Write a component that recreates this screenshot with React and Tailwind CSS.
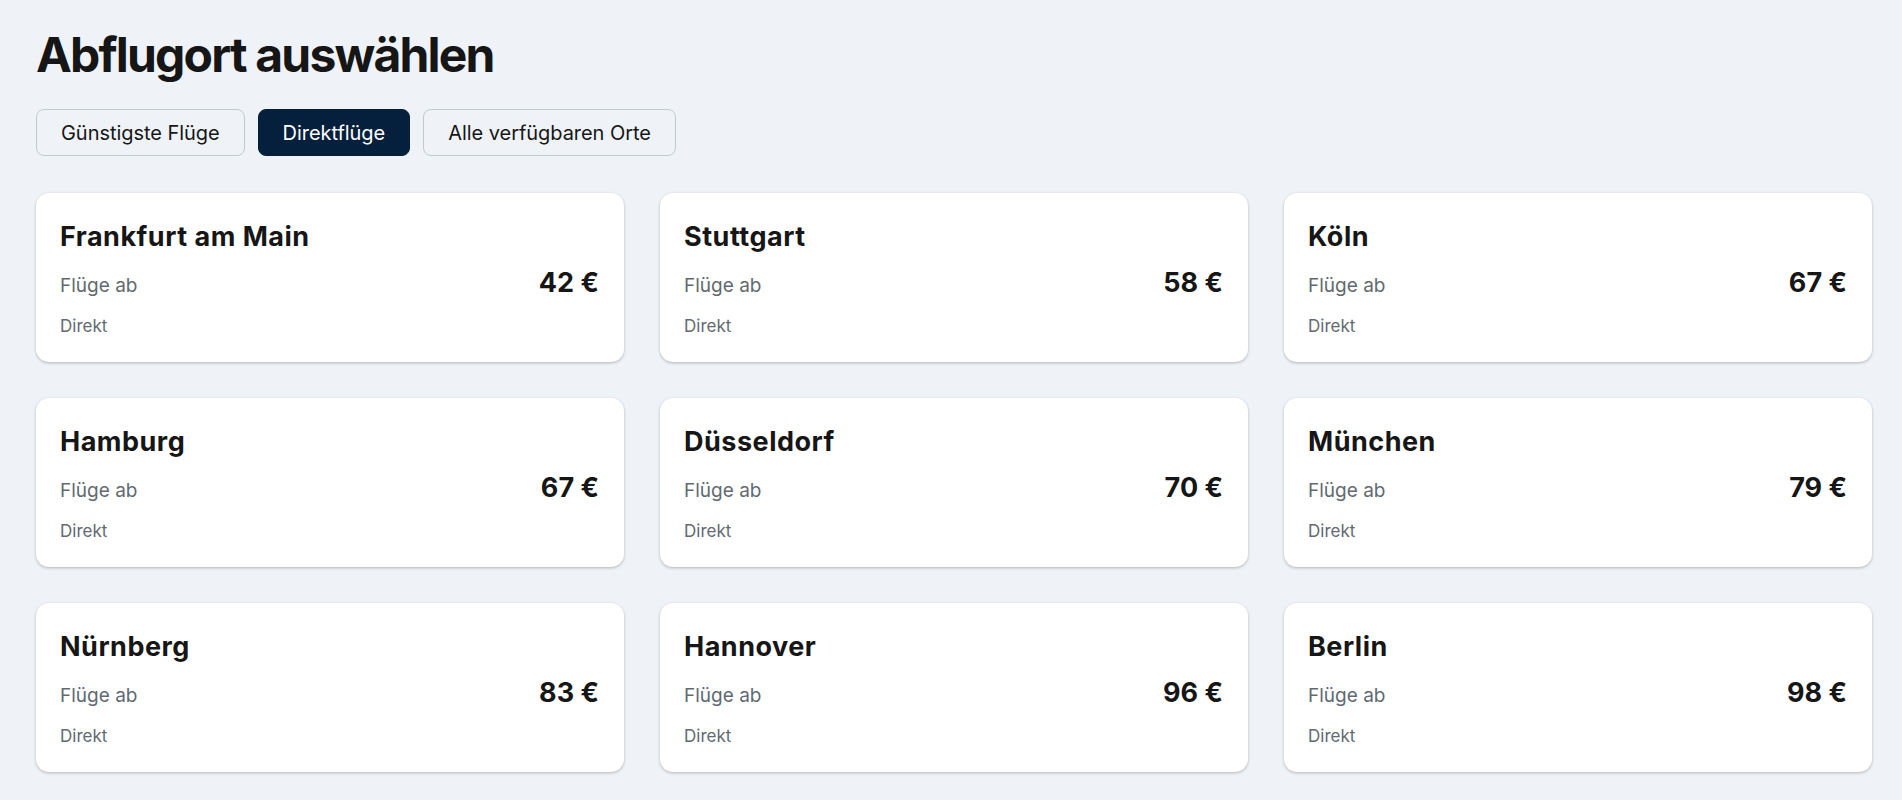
import React from "react";

const cities = [
  { name: "Frankfurt am Main", price: 42 },
  { name: "Stuttgart", price: 58 },
  { name: "Köln", price: 67 },
  { name: "Hamburg", price: 67 },
  { name: "Düsseldorf", price: 70 },
  { name: "München", price: 79 },
  { name: "Nürnberg", price: 83 },
  { name: "Hannover", price: 96 },
  { name: "Berlin", price: 98 },
];

const filters = [
  { label: "Günstigste Flüge", active: false },
  { label: "Direktflüge", active: true },
  { label: "Alle verfügbaren Orte", active: false },
];

function CityCard({ name, price }) {
  return (
    <div className="bg-white rounded-[13px] shadow-[0_1px_3px_0_rgba(37,32,31,0.3)] pl-6 pr-[25px] pt-[28px] pb-[26px]">
      <h3 className="text-[27px] leading-[32px] font-bold tracking-[0.5px] text-[#161616]">{name}</h3>
      <div className="mt-[14px] flex items-baseline justify-between h-[32px]">
        <span className="text-[19px] text-[#626971]">Flüge ab</span>
        <span className="text-[27px] leading-[32px] font-bold text-[#161616]">{price} €</span>
      </div>
      <p className="mt-[17px] text-[17px] leading-[20px] text-[#626971]">Direkt</p>
    </div>
  );
}

export default function App() {
  return (
    <div className="min-h-screen bg-[#eff3f8] pl-9 pr-[30px] pt-[31px] pb-10 font-['Inter',sans-serif]">
      <h1 className="text-[48px] leading-none font-bold text-[#161616] tracking-[-1.8px]">
        Abflugort auswählen
      </h1>

      {/* Filter buttons */}
      <div className="mt-[30px] flex gap-[13px]">
        {filters.map((f) => (
          <button
            key={f.label}
            className={
              f.active
                ? "h-[47px] px-6 rounded-lg border border-[#05203c] bg-[#05203c] text-white text-[20px] tracking-[-0.05px]"
                : "h-[47px] px-6 rounded-lg border border-[#c2c9cd] bg-[#eff3f8] text-[#161616] text-[20px] tracking-[-0.05px]"
            }
          >
            {f.label}
          </button>
        ))}
      </div>

      {/* City grid */}
      <div className="mt-[37px] grid grid-cols-3 gap-9">
        {cities.map((c) => (
          <CityCard key={c.name} name={c.name} price={c.price} />
        ))}
      </div>
    </div>
  );
}
